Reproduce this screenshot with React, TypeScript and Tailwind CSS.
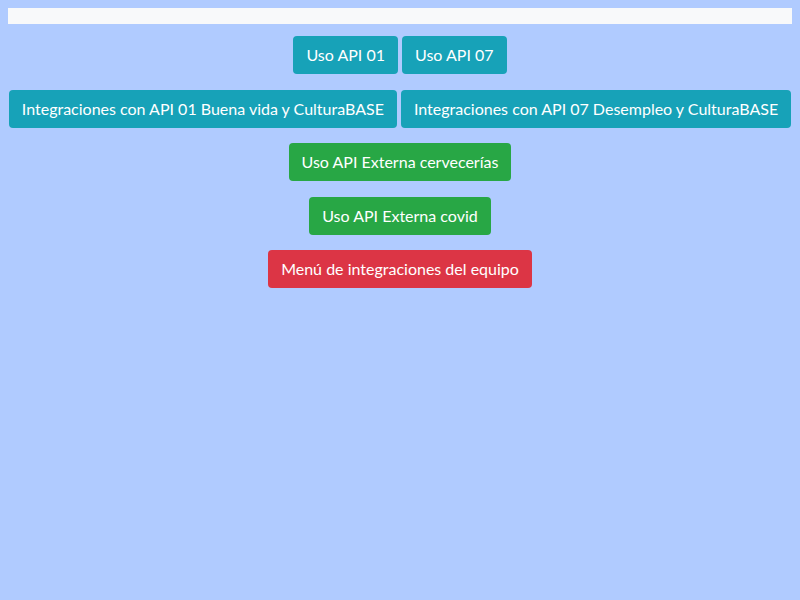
import React from 'react';

const Btn = ({ color, children }: { color: string; children: React.ReactNode }) => (
  <button className={`${color} h-[38px] px-3 rounded text-white text-base leading-6 border border-transparent whitespace-nowrap`}>
    {children}
  </button>
);

const App = () => {
  return (
    <div className="min-h-[600px] bg-[#b0cbff] p-2 font-['Lato','Liberation_Sans',sans-serif]">
      <div className="h-4 bg-[#f8f9fa]"></div>
      <div className="flex flex-col items-center mt-3 gap-[15.5px]">
        <div className="flex gap-1">
          <Btn color="bg-[#17a2b8]">Uso API 01</Btn>
          <Btn color="bg-[#17a2b8]">Uso API 07</Btn>
        </div>
        <div className="flex gap-1">
          <Btn color="bg-[#17a2b8]">Integraciones con API 01 Buena vida y CulturaBASE</Btn>
          <Btn color="bg-[#17a2b8]">Integraciones con API 07 Desempleo y CulturaBASE</Btn>
        </div>
        <Btn color="bg-[#28a745]">Uso API Externa cervecerías</Btn>
        <Btn color="bg-[#28a745]">Uso API Externa covid</Btn>
        <Btn color="bg-[#dc3545]">Menú de integraciones del equipo</Btn>
      </div>
    </div>
  );
};

export default App;
